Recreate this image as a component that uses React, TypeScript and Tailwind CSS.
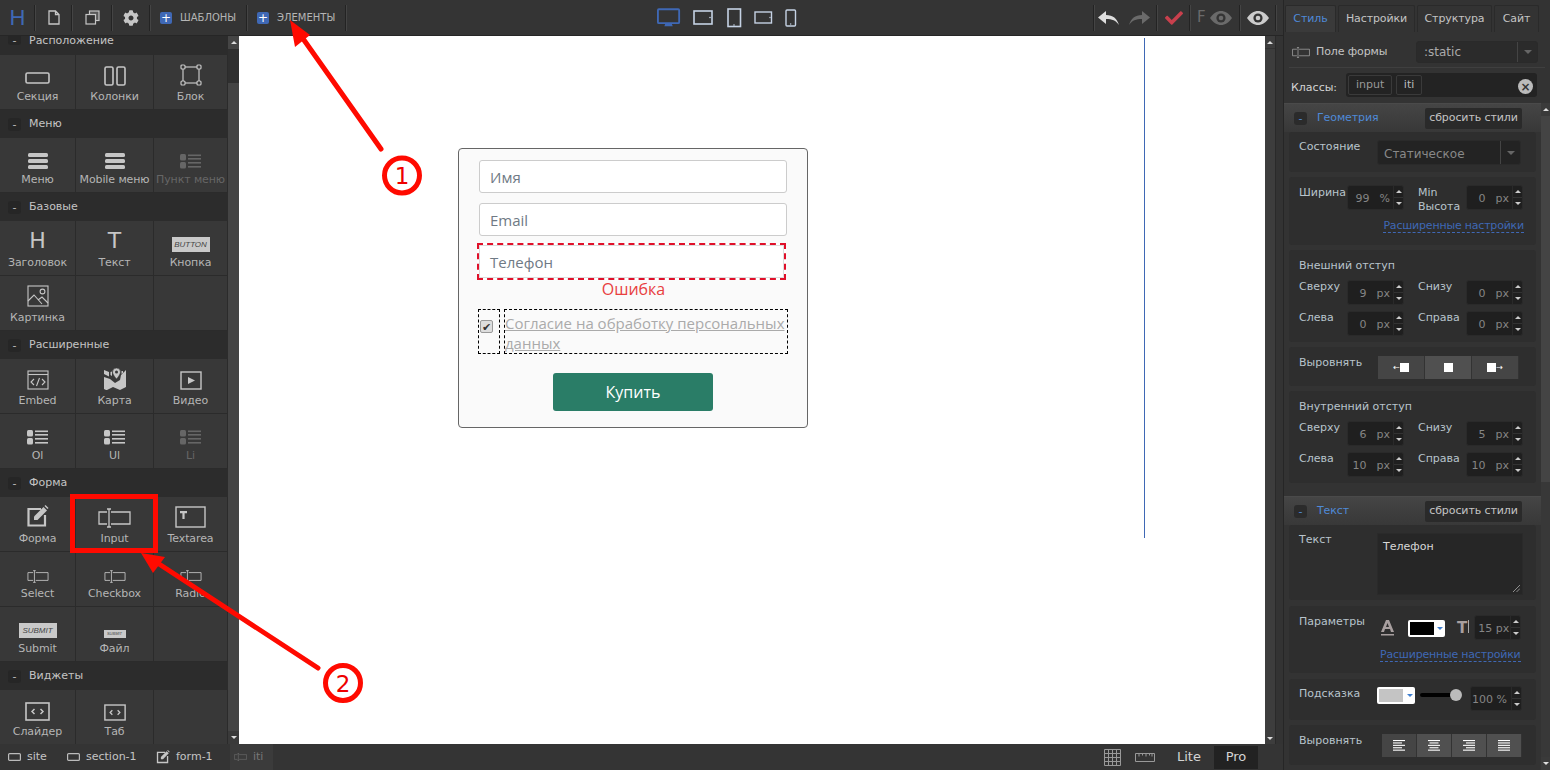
import React from "react";
import { FaCog, FaCheck } from "react-icons/fa";

const C = "#c6c6c6";

function Sep() {
  return <div className="h-[26px] w-[2px] shrink-0 border-l border-r border-l-[#232323] border-r-[#444]" />;
}

function PencilSquare({ size = 23, color = C }: { size?: number; color?: string }) {
  return (
    <svg width={size} height={size} viewBox="0 0 23 23" fill="none">
      <path d="M15 4H2.500v16.500H19V10" stroke={color} strokeWidth="2.200" />
      <path d="M8 11.500L17.500 2l3.500 3.500L11.500 15H8z" fill={color} />
      <path d="M18.500 1l1-1 3 3-1 1z" fill={color} />
    </svg>
  );
}
function EyeIcon({ w = 22, color = C, hole = "#343434" }: { w?: number; color?: string; hole?: string }) {
  return (
    <svg width={w} height={(w * 14) / 22} viewBox="0 0 22 14">
      <path d="M0 7C3 2.500 7 0 11 0s8 2.500 11 7c-3 4.500-7 7-11 7S3 11.500 0 7z" fill={color} />
      <circle cx="11" cy="7" r="4.600" fill={hole} />
      <circle cx="11" cy="7" r="2.300" fill={color} />
    </svg>
  );
}
function ArrowBack({ color, flip }: { color: string; flip?: boolean }) {
  return (
    <svg width="21" height="14" viewBox="0 0 21 14" fill={color} style={flip ? { transform: "scaleX(-1)" } : undefined}>
      <path d="M0 6.500L8 0v4c7 0 11 3.500 13 10-3-4.500-7-6-13-6v5z" />
    </svg>
  );
}
function SectionIcon() {
  return (
    <svg width="26" height="16" viewBox="0 0 26 16" fill="none" stroke={C} strokeWidth="1.600">
      <rect x="1" y="3" width="23" height="10" rx="1.500" />
    </svg>
  );
}
function ColumnsIcon() {
  return (
    <svg width="22" height="20" viewBox="0 0 22 20" fill="none" stroke={C} strokeWidth="1.600">
      <rect x="1" y="1" width="8" height="18" rx="1.500" />
      <rect x="13" y="1" width="8" height="18" rx="1.500" />
    </svg>
  );
}
function BlockIcon() {
  return (
    <svg width="22" height="22" viewBox="0 0 22 22" fill="none" stroke={C} strokeWidth="1.200">
      <rect x="3" y="3" width="16" height="16" />
      <rect x="1" y="1" width="4" height="4" rx="1" fill="#383838" />
      <rect x="17" y="1" width="4" height="4" rx="1" fill="#383838" />
      <rect x="1" y="17" width="4" height="4" rx="1" fill="#383838" />
      <rect x="17" y="17" width="4" height="4" rx="1" fill="#383838" />
    </svg>
  );
}
function MenuIcon() {
  return (
    <svg width="20" height="16" viewBox="0 0 20 16" fill={C}>
      <rect x="0" y="0" width="20" height="4" rx="1.500" />
      <rect x="0" y="6" width="20" height="4" rx="1.500" />
      <rect x="0" y="12" width="20" height="4" rx="1.500" />
    </svg>
  );
}
function ListIcon({ color = C, h = 15 }: { color?: string; h?: number }) {
  return (
    <svg width="21" height={h} viewBox="0 0 21 15" fill={color}>
      <rect x="0" y="0" width="6" height="6.500" rx="1.500" />
      <rect x="0" y="8" width="6" height="6.500" rx="1.500" />
      <rect x="8" y="0.500" width="13" height="1.600" />
      <rect x="8" y="4" width="13" height="1.600" />
      <rect x="8" y="8" width="13" height="1.600" />
      <rect x="8" y="12" width="13" height="1.600" />
    </svg>
  );
}
function InputIcon({ w = 33, color = C }: { w?: number; color?: string }) {
  const h = Math.round((w / 33) * 20);
  return (
    <svg width={w} height={h} viewBox="0 0 33 20" fill="none" stroke={color} strokeWidth="1.300">
      <path d="M9 4H1v12h8" />
      <path d="M13 4h19v12H13" />
      <path d="M11 1v18M9 1h4M9 19h4" />
    </svg>
  );
}
function TextareaIcon() {
  return (
    <svg width="31" height="22" viewBox="0 0 31 22" fill="none" stroke={C} strokeWidth="1.400">
      <rect x="1" y="1" width="29" height="20" />
      <path d="M5 5h7v2.200H9.600V13H7.400V7.200H5z" fill={C} stroke="none" />
    </svg>
  );
}
function ImageIcon() {
  return (
    <svg width="22" height="22" viewBox="0 0 22 22" fill="none" stroke={C} strokeWidth="1.100">
      <rect x="1" y="1" width="20" height="20" />
      <circle cx="15.500" cy="6.500" r="2.400" />
      <path d="M1 16l6-6 8 9M11 15l4-3 6 6" />
    </svg>
  );
}
function EmbedIcon() {
  return (
    <svg width="22" height="20" viewBox="0 0 22 20" fill="none" stroke={C} strokeWidth="1.100">
      <rect x="1" y="1" width="20" height="18" />
      <path d="M1 4.500h20" />
      <path d="M7 9l-3 3 3 3M15 9l3 3-3 3M12.500 8l-3 8" />
    </svg>
  );
}
function MapIcon() {
  return (
    <svg width="22" height="22" viewBox="0 0 22 22" fill={C}>
      <path d="M0 2l5 2v4.500L0 6z" />
      <path d="M0 9l6 2 5 4 5-3 1-5 5-5v17l-6 3-7-3-6 3H2l-2-1z" />
      <path d="M17.500 3v3l1.500-1V3zM6.500 4l1.500-.5V8L6.500 7z" />
      <path d="M12.500 0a4 4 0 0 1 4 4c0 2.500-4 7-4 7s-4-4.500-4-7a4 4 0 0 1 4-4z" stroke="#383838" strokeWidth="0.600" />
      <circle cx="12.500" cy="4" r="1.500" fill="#383838" />
    </svg>
  );
}
function VideoIcon() {
  return (
    <svg width="22" height="19" viewBox="0 0 22 19" fill="none" stroke={C} strokeWidth="1.400">
      <rect x="1" y="1" width="20" height="17" />
      <path d="M8 6l7 3.500-7 3.500z" fill={C} stroke="none" />
    </svg>
  );
}
function ButtonIcon({ label, w = 38, h = 15, size = 8 }: { label: string; w?: number; h?: number; size?: number }) {
  return (
    <div
      className="flex items-center justify-center bg-[#c9c9c9] italic text-[#444]"
      style={{ width: w, height: h, fontSize: size, fontFamily: "'Liberation Sans', sans-serif" }}
    >
      {label}
    </div>
  );
}
function SlideIcon({ w = 25, h = 19 }: { w?: number; h?: number }) {
  return (
    <svg width={w} height={h} viewBox="0 0 25 19" fill="none" stroke={C} strokeWidth="1.600">
      <rect x="1" y="1" width="23" height="17" />
      <path d="M9.500 7l-2.500 2.500 2.500 2.500M15.500 7l2.500 2.500-2.500 2.500" strokeWidth="1.500" />
    </svg>
  );
}

type TileT = { icon?: React.ReactNode; label?: string; dim?: boolean };

function Tile({ icon, label, dim, w }: TileT & { w: string }) {
  return (
    <div className={`${w} flex h-[54px] flex-col items-center border-r border-[#2b2b2b] bg-[#383838]`}>
      <div className="flex h-[34px] items-end justify-center pb-[3px]">{icon}</div>
      <div className={`mt-[1px] whitespace-nowrap text-[11px] leading-[14px] tracking-[-0.1px] ${dim ? "text-[#666]" : "text-[#b5b5b5]"}`}>{label}</div>
    </div>
  );
}
function TileRow({ items }: { items: TileT[] }) {
  const ws = ["w-[76px]", "w-[78px]", "w-[74px]"];
  return (
    <div className="flex h-[55px] border-b border-[#2b2b2b]">
      {[0, 1, 2].map((i) => (
        <Tile key={i} {...(items[i] || {})} w={ws[i]} />
      ))}
    </div>
  );
}
function Head({ label }: { label: string }) {
  return (
    <div className="flex h-[28px] items-center bg-[#2c2c2c] pl-[8px]">
      <div className="flex h-[13px] w-[13px] items-center justify-center rounded-[3px] bg-[#262626] text-[11px] leading-none text-[#bbb]">-</div>
      <div className="ml-[8px] text-[11px] leading-[14px] text-[#c4c4c4]">{label}</div>
    </div>
  );
}

function Sidebar() {
  return (
    <div className="flex h-full w-[239px] shrink-0">
      <div className="w-[228px] bg-[#383838]">
        <div className="flex h-[19px] items-start bg-[#2c2c2c] pl-[8px]">
          <div className="flex h-[9px] w-[13px] items-center justify-center rounded-b-[3px] bg-[#262626] text-[11px] leading-none text-[#bbb]">-</div>
          <div className="ml-[8px] mt-[1px] text-[11px] leading-[8px] text-[#c4c4c4]">Расположение</div>
        </div>
        <TileRow items={[{ icon: <SectionIcon />, label: "Секция" }, { icon: <ColumnsIcon />, label: "Колонки" }, { icon: <BlockIcon />, label: "Блок" }]} />
        <Head label="Меню" />
        <TileRow items={[{ icon: <MenuIcon />, label: "Меню" }, { icon: <MenuIcon />, label: "Mobile меню" }, { icon: <ListIcon color="#666" h={15} />, label: "Пункт меню", dim: true }]} />
        <Head label="Базовые" />
        <TileRow
          items={[
            { icon: <span className="text-[22px] leading-[22px] text-[#c6c6c6]">H</span>, label: "Заголовок" },
            { icon: <span className="text-[22px] leading-[22px] text-[#c6c6c6]">T</span>, label: "Текст" },
            { icon: <ButtonIcon label="BUTTON" />, label: "Кнопка" },
          ]}
        />
        <TileRow items={[{ icon: <ImageIcon />, label: "Картинка" }]} />
        <Head label="Расширенные" />
        <TileRow items={[{ icon: <EmbedIcon />, label: "Embed" }, { icon: <MapIcon />, label: "Карта" }, { icon: <VideoIcon />, label: "Видео" }]} />
        <TileRow items={[{ icon: <ListIcon />, label: "Ol" }, { icon: <ListIcon />, label: "Ul" }, { icon: <ListIcon color="#666" />, label: "Li", dim: true }]} />
        <Head label="Форма" />
        <TileRow
          items={[
            { icon: <PencilSquare />, label: "Форма" },
            { icon: <InputIcon />, label: "Input" },
            { icon: <TextareaIcon />, label: "Textarea" },
          ]}
        />
        <TileRow items={[{ icon: <InputIcon w={22} />, label: "Select" }, { icon: <InputIcon w={22} />, label: "Checkbox" }, { icon: <InputIcon w={22} />, label: "Radio" }]} />
        <TileRow items={[{ icon: <ButtonIcon label="SUBMIT" />, label: "Submit" }, { icon: <ButtonIcon label="SUBMIT" w={22} h={8} size={4} />, label: "Файл" }, {}]} />
        <Head label="Виджеты" />
        <TileRow items={[{ icon: <SlideIcon />, label: "Слайдер" }, { icon: <SlideIcon w={22} h={17} />, label: "Таб" }, {}]} />
      </div>
      <div className="flex w-[11px] flex-col bg-[#2f2f2f]">
        <div className="flex h-[13px] items-center justify-center bg-[#454545]">
          <div className="h-0 w-0 border-x-[3px] border-b-[3px] border-x-transparent border-b-[#ddd]" />
        </div>
        <div className="h-[34px]" />
        <div className="flex-1 bg-[#444]" />
        <div className="flex h-[13px] items-center justify-center bg-[#3a3a3a]">
          <div className="h-0 w-0 border-x-[3px] border-t-[3px] border-x-transparent border-t-[#ddd]" />
        </div>
      </div>
    </div>
  );
}

function Plus() {
  return <div className="flex h-[12px] w-[12px] items-center justify-center rounded-[2px] bg-[#3f68b5] text-[12px] leading-none text-white">+</div>;
}

function DeviceIcons() {
  const light = "#c5d2e4";
  return (
    <div className="ml-[310px] flex items-center">
      <svg width="24" height="22" viewBox="0 0 26 22" fill="none">
        <rect x="1" y="1.500" width="23" height="15" rx="1" stroke="#3f68b5" strokeWidth="2" />
        <path d="M9 17h7l1 3H8z" fill="#3f68b5" />
      </svg>
      <svg className="ml-[12px]" width="20" height="16" viewBox="0 0 20 16" fill="none">
        <rect x="1" y="1" width="18" height="13" stroke={light} strokeWidth="1.600" />
        <circle cx="17" cy="7.500" r="0.800" fill={light} />
      </svg>
      <svg className="ml-[14px]" width="15" height="20" viewBox="0 0 15 20" fill="none">
        <rect x="1" y="1" width="12.500" height="17.500" stroke={light} strokeWidth="1.600" />
        <circle cx="7" cy="17" r="0.800" fill={light} />
      </svg>
      <svg className="ml-[12px]" width="19" height="13" viewBox="0 0 19 13" fill="none">
        <rect x="1" y="1" width="16.500" height="11" stroke={light} strokeWidth="1.400" />
        <circle cx="16" cy="6.500" r="0.700" fill={light} />
      </svg>
      <svg className="ml-[12px]" width="12" height="18" viewBox="0 0 12 18" fill="none">
        <rect x="1" y="1" width="9.500" height="16" rx="1" stroke={light} strokeWidth="1.400" />
        <circle cx="5.700" cy="15" r="0.700" fill={light} />
      </svg>
    </div>
  );
}

function TopBar() {
  return (
    <div className="flex h-[36px] shrink-0 items-center border-b border-[#262626] bg-[#343434]">
      <div className="flex w-[34px] justify-center pl-[1px] text-[22px] leading-none text-[#3f68b5]" style={{ fontFamily: "'Liberation Sans', sans-serif" }}>H</div>
      <Sep />
      <div className="flex w-[35px] justify-center">
        <svg width="12" height="15" viewBox="0 0 12 15" fill="none" stroke={C} strokeWidth="1.300">
          <path d="M1 1h6.500L11 4.500V14H1zM7.500 1v3.500H11" />
        </svg>
      </div>
      <Sep />
      <div className="flex w-[38px] justify-center">
        <svg width="15" height="15" viewBox="0 0 15 15" fill="none" stroke={C} strokeWidth="1.200">
          <rect x="4.500" y="1" width="9.500" height="9.500" fill="#5a5a5a" />
          <rect x="1" y="4.500" width="9.500" height="9.500" fill="#343434" />
        </svg>
      </div>
      <Sep />
      <div className="flex w-[36px] justify-center">
        <FaCog size={16} color={C} />
      </div>
      <Sep />
      <div className="flex w-[95px] items-center pl-[9px]">
        <Plus />
        <span className="ml-[8px] text-[10px] text-[#b5b5b5]">ШАБЛОНЫ</span>
      </div>
      <Sep />
      <div className="flex w-[97px] items-center pl-[9px]">
        <Plus />
        <span className="ml-[8px] text-[10px] text-[#b5b5b5]">ЭЛЕМЕНТЫ</span>
      </div>
      <Sep />
      <DeviceIcons />
      <div className="ml-auto mr-[6px] flex items-center">
        <Sep />
        <div className="flex w-[61px] items-center pl-[3px]">
          <ArrowBack color="#ddd" />
          <div className="ml-[10px]">
            <ArrowBack color="#6a6a6a" flip />
          </div>
        </div>
        <Sep />
        <div className="flex w-[31px] justify-center">
          <FaCheck size={18} color="#c8404d" />
        </div>
        <Sep />
        <div className="flex w-[48px] items-center pl-[6px]">
          <span className="text-[15px] leading-none text-[#6a6a6a]">F</span>
          <div className="ml-[4px]">
            <EyeIcon color="#6a6a6a" />
          </div>
        </div>
        <Sep />
        <div className="flex w-[34px] justify-center">
          <EyeIcon color="#ccc" />
        </div>
        <Sep />
      </div>
    </div>
  );
}

function Field({ placeholder }: { placeholder: string }) {
  return (
    <div className="mb-[10px] ml-[20px] flex h-[33px] w-[308px] items-center rounded-[3px] border border-[#ccc] bg-white pl-[10px] pt-[2px] text-[15px] text-[#6f7a85]">
      {placeholder}
    </div>
  );
}

function Canvas() {
  return (
    <div className="flex min-w-0 flex-1 bg-white" style={{ fontFamily: "'Open Sans', sans-serif" }}>
      <div className="ml-[219px] mt-[112px] h-[280px] w-[350px] shrink-0 rounded-[4px] border border-[#666] bg-[#fafafa] pt-[11px]">
        <Field placeholder="Имя" />
        <Field placeholder="Email" />
        <div className="-mt-[3px] ml-[18px] h-[37px] w-[309px] border-2 border-dashed border-[#e0102a] bg-white">
          <div className="flex h-[33px] items-center border border-[#ddd] pl-[10px] pt-[2px] text-[15px] text-[#6f7a85]">Телефон</div>
        </div>
        <div className="ml-[1px] mt-[-2px] text-center text-[16px] leading-[22px] text-[#e8403f]">Ошибка</div>
        <div className="ml-[19px] mt-[9px] flex">
          <div className="h-[45px] w-[22px] border border-dashed border-black pl-[1px] pt-[10px]">
            <div className="flex h-[13px] w-[13px] items-center justify-center rounded-[2px] border border-[#999] bg-[#ddd] text-[11px] leading-none text-[#333]">✔</div>
          </div>
          <div className="ml-[4px] h-[45px] w-[284px] border border-dashed border-black text-[15px] leading-[20px] text-[#aaa] underline">
            <div className="whitespace-nowrap pt-[3px]">Согласие на обработку персональных</div>
            <div>данных</div>
          </div>
        </div>
        <div className="ml-[94px] mt-[19px] flex h-[38px] w-[160px] items-center justify-center rounded-[3px] bg-[#2a7d67] text-[16px] text-white">Купить</div>
      </div>
      <div className="ml-[336px] mt-[2px] h-[500px] w-px bg-[#3f68b5]" />
    </div>
  );
}

function CanvasScroll() {
  return (
    <div className="flex w-[18px] shrink-0 bg-[#333]">
      <div className="flex w-[10px] flex-col justify-between bg-[#3d3d3d]">
        <div className="flex h-[13px] items-center justify-center border-b border-[#333]">
          <div className="h-0 w-0 border-x-[3px] border-b-[3px] border-x-transparent border-b-[#ddd]" />
        </div>
        <div className="mb-[4px] flex justify-center">
          <div className="h-0 w-0 border-x-[3px] border-t-[3px] border-x-transparent border-t-[#ddd]" />
        </div>
      </div>
      <div className="w-px bg-[#2a2a2a]" />
    </div>
  );
}

function Crumb({ icon, label, dim, w, pl = 8 }: { icon: React.ReactNode; label: string; dim?: boolean; w: string; pl?: number }) {
  return (
    <div className={`${w} flex h-full items-center ${dim ? "bg-[#3b3b3b]" : ""}`} style={{ paddingLeft: pl }}>
      {icon}
      <span className={`ml-[6px] text-[11px] ${dim ? "text-[#777]" : "text-[#c4c4c4]"}`}>{label}</span>
    </div>
  );
}

function BottomBar() {
  const sm = (
    <svg width="13" height="8" viewBox="0 0 13 8" fill="none" stroke="#bbb" strokeWidth="1.200">
      <rect x="0.600" y="0.600" width="11.800" height="6.800" rx="1" />
    </svg>
  );
  return (
    <div className="flex h-[26px] shrink-0 items-center bg-[#343434]">
      <Crumb icon={sm} label="site" w="w-[59px]" />
      <Crumb icon={sm} label="section-1" w="w-[90px]" />
      <Crumb icon={<PencilSquare size={14} />} label="form-1" w="w-[81px]" pl={7} />
      <Crumb icon={<InputIcon w={13} color="#777" />} label="iti" w="w-[43px]" pl={4} dim />
      <div className="ml-auto flex h-full items-center pr-[25px]">
        <svg width="17" height="17" viewBox="0 0 17 17" fill="none" stroke="#999" strokeWidth="1">
          <path d="M.5.500h16v16H.500zM.500 4.500h16M.500 8.500h16M.500 12.500h16M4.500.500v16M8.500.500v16M12.500.500v16" />
        </svg>
        <svg className="ml-[14px]" width="20" height="9" viewBox="0 0 20 9" fill="none" stroke="#999" strokeWidth="1">
          <path d="M.5.500h19v8H.500zM4 .500v3M7.500.500v2M11 .500v3M14.500.500v2M17 .500v3" />
        </svg>
        <span className="ml-[22px] w-[25px] text-[13px] text-[#d4d4d4]">Lite</span>
        <div className="ml-[12px] flex h-[23px] w-[44px] items-center justify-center bg-[#222] text-[13px] text-[#d4d4d4]">Pro</div>
      </div>
    </div>
  );
}

function Tab({ label, w, active }: { label: string; w: string; active?: boolean }) {
  return (
    <div className={`${w} flex h-[27px] items-center justify-center rounded-t-[2px] border border-b-0 border-[#2a2a2a] text-[11px] tracking-[-0.1px] ${active ? "bg-[#3a3a3a] text-[#4f8ad8]" : "bg-[#333] text-[#c4c4c4]"}`}>
      {label}
    </div>
  );
}

function Arrows() {
  return (
    <div className="flex w-[10px] flex-col border-l border-[#2a2a2a]">
      <div className="flex flex-1 items-center justify-center border-b border-[#333]">
        <div className="h-0 w-0 border-x-[3px] border-b-[3px] border-x-transparent border-b-[#ccc]" />
      </div>
      <div className="flex flex-1 items-center justify-center">
        <div className="h-0 w-0 border-x-[3px] border-t-[3px] border-x-transparent border-t-[#ccc]" />
      </div>
    </div>
  );
}

function Num({ v, u = "px" }: { v: string; u?: string }) {
  return (
    <div className="flex h-[25px] w-[57px] rounded-[3px] border border-[#2a2a2a] bg-[#1f1f1f] text-[11px] text-[#858585]">
      <div className="flex flex-1 items-center justify-end pr-[3px] pt-[2px]">
        <span className="pr-[10px]">{v}</span>
        <span>{u}</span>
      </div>
      <Arrows />
    </div>
  );
}

function Card({ h, children, cls = "" }: { h: string; children: React.ReactNode; cls?: string }) {
  return <div className={`${h} mb-[5px] w-[247px] rounded-[3px] bg-[#2e2e2e] px-[10px] text-[11px] leading-[14px] text-[#b8c4cc] ${cls}`}>{children}</div>;
}

function PairRow({ a, av, b, bv }: { a: string; av: string; b: string; bv: string }) {
  return (
    <div className="mb-[6px] flex">
      <div className="w-[48px]">{a}</div>
      <Num v={av} />
      <div className="ml-[14px] w-[48px]">{b}</div>
      <Num v={bv} />
    </div>
  );
}

function SecHead({ title }: { title: string }) {
  return (
    <div className="flex h-[29px] items-center border-t border-[#4a4a4a] bg-gradient-to-b from-[#454545] to-[#383838] pl-[10px]">
      <div className="flex h-[13px] w-[13px] items-center justify-center rounded-[3px] bg-[#2b2b2b] text-[11px] leading-none text-[#4f8ad8]">-</div>
      <div className="ml-[10px] w-[108px] pt-[1px] text-[11px] tracking-[-0.1px] text-[#4f8ad8]">{title}</div>
      <div className="flex h-[21px] w-[97px] items-center justify-center rounded-[2px] bg-[#2a2a2a] pt-[1px] text-[11px] tracking-[-0.1px] text-[#c4c4c4]">сбросить стили</div>
    </div>
  );
}

function Seg({ children, w, light }: { children: React.ReactNode; w: string; light?: boolean }) {
  return <div className={`${w} flex h-[23px] items-center justify-center border-r border-[#333] ${light ? "bg-[#505050]" : "bg-[#454545]"}`}>{children}</div>;
}

function AlignIcon({ kind }: { kind: number }) {
  const rows = [
    [0, 12, 0, 9],
    [0, 12, 1.500, 9],
    [0, 12, 3, 9],
    [0, 12, 0, 12],
  ][kind];
  return (
    <svg width="12" height="11" viewBox="0 0 12 11" fill="#fff">
      {[0, 1, 2, 3, 4].map((i) => {
        const k = i % 2 === 0 ? 0 : 2;
        return <rect key={i} x={rows[k]} y={i * 2.400} width={rows[k + 1]} height="1.100" />;
      })}
    </svg>
  );
}

function Link() {
  return <span className="whitespace-nowrap border-b border-dashed border-[#3f68b5] text-[11px] leading-[13px] tracking-[-0.2px] text-[#3f68b5]">Расширенные настройки</span>;
}

function RightPanel() {
  return (
    <div className="flex h-full w-[267px] shrink-0 flex-col border-l border-[#262626] bg-[#333]">
      <div className="flex h-[32px] shrink-0 items-end gap-[2px] pl-[1px]">
        <Tab label="Стиль" w="w-[51px]" active />
        <Tab label="Настройки" w="w-[77px]" />
        <Tab label="Структура" w="w-[75px]" />
        <Tab label="Сайт" w="w-[45px]" />
      </div>
      <div className="h-[36px] shrink-0 px-[5px] pt-[9px]">
        <div className="flex h-[27px] items-start border-b border-[#3f3f3f]">
          <div className="ml-[3px] mt-[3px] flex items-center">
            <InputIcon w={18} color="#aaa" />
            <span className="ml-[6px] text-[11px] tracking-[-0.1px] text-[#c4c4c4]">Поле формы</span>
          </div>
          <div className="ml-auto mr-[7px] flex h-[22px] w-[122px] rounded-[3px] border border-[#2a2a2a] bg-[#2b2b2b] text-[12px] text-[#aaa]">
            <span className="flex-1 pl-[7px] leading-[20px]">:static</span>
            <div className="flex w-[20px] items-center justify-center border-l border-[#444]">
              <div className="h-0 w-0 border-x-[4px] border-t-[4px] border-x-transparent border-t-[#666]" />
            </div>
          </div>
        </div>
      </div>
      <div className="flex h-[35px] shrink-0 items-start bg-[#333] pl-[7px] pt-[5px]">
        <span className="mt-[7px] text-[11px] text-[#d4d4d4]">Классы:</span>
        <div className="ml-[9px] flex h-[24px] w-[191px] items-center rounded-[3px] bg-[#232323] pl-[2px] pr-[4px] text-[11px] text-[#999]">
          <div className="flex h-[20px] w-[44px] items-center justify-center rounded-[2px] border border-[#3a3a3a] pt-[1px]">input</div>
          <div className="ml-[4px] flex h-[20px] w-[26px] items-center justify-center rounded-[2px] border border-[#3a3a3a] pt-[1px] text-[#bbb]">iti</div>
          <div className="ml-auto mt-[3px] flex h-[15px] w-[15px] items-center justify-center rounded-full bg-[#bbb] text-[12px] font-bold leading-none text-[#333]">×</div>
        </div>
      </div>
      <div className="flex min-h-0 flex-1">
        <div className="min-w-0 flex-1 overflow-hidden">
          <SecHead title="Геометрия" />
          <div className="px-[5px]">
            <Card h="h-[40px]" cls="flex pt-[8px]">
              <div className="w-[78px]">Состояние</div>
              <div className="flex h-[25px] w-[144px] rounded-[3px] border border-[#2a2a2a] bg-[#232323] text-[12px] text-[#888]">
                <span className="flex-1 pl-[6px] leading-[27px]">Статическое</span>
                <div className="flex w-[20px] items-center justify-center border-l border-[#444]">
                  <div className="h-0 w-0 border-x-[4px] border-t-[4px] border-x-transparent border-t-[#666]" />
                </div>
              </div>
            </Card>
            <Card h="h-[68px]" cls="pt-[8px]">
              <div className="flex">
                <div className="w-[48px] pt-[1px]">Ширина</div>
                <Num v="99" u="%" />
                <div className="ml-[14px] w-[48px] pt-[1px]">
                  Min
                  <br />
                  Высота
                </div>
                <Num v="0" />
              </div>
              <div className="mt-[5px] flex justify-end pr-[2px]">
                <Link />
              </div>
            </Card>
            <Card h="h-[92px]" cls="pt-[9px]">
              <div className="mb-[7px]">Внешний отступ</div>
              <PairRow a="Сверху" av="9" b="Снизу" bv="0" />
              <PairRow a="Слева" av="0" b="Справа" bv="0" />
            </Card>
            <Card h="h-[39px]" cls="flex pt-[9px]">
              <div className="w-[79px]">Выровнять</div>
              <Seg w="w-[47px]">
                <span className="text-[8px] leading-none text-white">←</span>
                <div className="h-[9px] w-[9px] bg-white" />
              </Seg>
              <Seg w="w-[47px]" light>
                <div className="h-[9px] w-[9px] bg-white" />
              </Seg>
              <Seg w="w-[47px]">
                <div className="h-[9px] w-[9px] bg-white" />
                <span className="text-[8px] leading-none text-white">→</span>
              </Seg>
            </Card>
            <Card h="h-[92px]" cls="pt-[9px]">
              <div className="mb-[7px]">Внутренний отступ</div>
              <PairRow a="Сверху" av="6" b="Снизу" bv="5" />
              <PairRow a="Слева" av="10" b="Справа" bv="10" />
            </Card>
          </div>
          <div className="h-[8px]" />
          <SecHead title="Текст" />
          <div className="px-[5px]">
            <Card h="h-[75px]" cls="mb-[6px] flex pt-[8px]">
              <div className="w-[78px]">Текст</div>
              <div className="relative h-[62px] w-[146px] border border-[#2a2a2a] bg-[#262626] pl-[5px] pt-[6px] text-[#d8d8d8]">
                Телефон
                <svg className="absolute bottom-[2px] right-[2px]" width="7" height="7" viewBox="0 0 7 7" stroke="#aaa" strokeWidth="0.800">
                  <path d="M0 7L7 0M3.500 7L7 3.500" />
                </svg>
              </div>
            </Card>
            <Card h="h-[67px]" cls="mb-[6px] pt-[9px]">
              <div className="flex items-start">
                <div className="w-[82px]">Параметры</div>
                <svg className="mt-[5px]" width="13" height="16" viewBox="0 0 13 16" fill="#a89f9f">
                  <path d="M5 0h3l5 12h-3l-1-3H4l-1 3H0zM5 7h3L6.500 3zM0 14h13v1.500H0z" fillRule="evenodd" />
                </svg>
                <div className="ml-[14px] mt-[5px] flex h-[17px] w-[37px] items-center rounded-[2px] bg-white pl-[2px]">
                  <div className="h-[13px] w-[24px] bg-black" />
                  <div className="ml-[3px] h-0 w-0 border-x-[3px] border-t-[3px] border-x-transparent border-t-[#3f7fd0]" />
                </div>
                <span className="ml-[12px] mt-[5px] text-[15px] font-bold leading-[16px] text-[#a89f9f]">T</span>
                <div className="ml-[1px] mt-[5px] h-[13px] w-px bg-[#aaa]" />
                <div className="ml-[5px]">
                  <div className="flex h-[25px] w-[47px] rounded-[3px] border border-[#2a2a2a] bg-[#1f1f1f] text-[#858585]">
                    <span className="flex-1 pl-[3px] text-[11px] leading-[26px]">15 px</span>
                    <Arrows />
                  </div>
                </div>
              </div>
              <div className="mt-[8px] pl-[81px]">
                <Link />
              </div>
            </Card>
            <Card h="h-[41px]" cls="flex items-start pt-[8px]">
              <div className="w-[78px]">Подсказка</div>
              <div className="flex h-[17px] w-[38px] items-center rounded-[2px] bg-white pl-[2px]">
                <div className="h-[13px] w-[24px] bg-[#c4c4c4]" />
                <div className="ml-[4px] h-0 w-0 border-x-[3px] border-t-[3px] border-x-transparent border-t-[#3f7fd0]" />
              </div>
              <div className="ml-[5px] mt-[6px] flex h-[4px] w-[42px] items-center justify-end rounded-[2px] bg-black">
                <div className="h-[12px] w-[12px] shrink-0 rounded-full bg-[#bbb]" />
              </div>
              <div className="-mt-[1px] ml-[8px] flex h-[25px] w-[52px] rounded-[3px] border border-[#2a2a2a] bg-[#1f1f1f] text-[#858585]">
                <span className="flex-1 pl-[1px] text-[11px] leading-[26px]">100 %</span>
                <Arrows />
              </div>
            </Card>
            <Card h="h-[40px]" cls="flex pt-[9px]">
              <div className="w-[83px]">Выровнять</div>
              {[0, 1, 2, 3].map((k) => (
                <Seg key={k} w="w-[35px]" light={k > 0}>
                  <AlignIcon kind={k} />
                </Seg>
              ))}
            </Card>
          </div>
        </div>
        <div className="flex w-[9px] shrink-0 flex-col">
          <div className="flex h-[13px] items-center justify-center bg-[#3a3a3a]">
            <div className="h-0 w-0 border-x-[3px] border-b-[3px] border-x-transparent border-b-[#ddd]" />
          </div>
          <div className="h-[366px] bg-[#444]" />
          <div className="flex-1 bg-[#383838]" />
          <div className="flex h-[13px] items-center justify-center bg-[#3a3a3a]">
            <div className="h-0 w-0 border-x-[3px] border-t-[3px] border-x-transparent border-t-[#ddd]" />
          </div>
        </div>
      </div>
    </div>
  );
}

function Overlay() {
  return (
    <svg className="pointer-events-none absolute inset-0" width="1550" height="770" viewBox="0 0 1550 770" fill="none">
      <rect x="72.500" y="496.500" width="83" height="54" stroke="#ff0a00" strokeWidth="5" />
      <path d="M381 149L299 33" stroke="#ff0a00" strokeWidth="5" strokeLinecap="round" />
      <path d="M290 20L295 47L310 35Z" fill="#ff0a00" />
      <path d="M318 668L156 562" stroke="#ff0a00" strokeWidth="5" strokeLinecap="round" />
      <path d="M141 553L165 557L153 573Z" fill="#ff0a00" />
      <circle cx="402" cy="175.500" r="17.500" fill="#fff" stroke="#ff0a00" strokeWidth="5" />
      <circle cx="343" cy="683" r="17.500" fill="#fff" stroke="#ff0a00" strokeWidth="5" />
      <text x="402" y="184" textAnchor="middle" fontSize="23" fill="#e00" fontFamily="'DejaVu Sans', sans-serif">1</text>
      <text x="343" y="691.500" textAnchor="middle" fontSize="23" fill="#e00" fontFamily="'DejaVu Sans', sans-serif">2</text>
    </svg>
  );
}

export default function App() {
  return (
    <div className="relative flex h-[770px] w-[1550px] overflow-hidden bg-[#333]" style={{ fontFamily: "'DejaVu Sans', sans-serif" }}>
      <div className="flex min-w-0 flex-1 flex-col">
        <TopBar />
        <div className="flex min-h-0 flex-1">
          <Sidebar />
          <Canvas />
          <CanvasScroll />
        </div>
        <BottomBar />
      </div>
      <RightPanel />
      <Overlay />
    </div>
  );
}
